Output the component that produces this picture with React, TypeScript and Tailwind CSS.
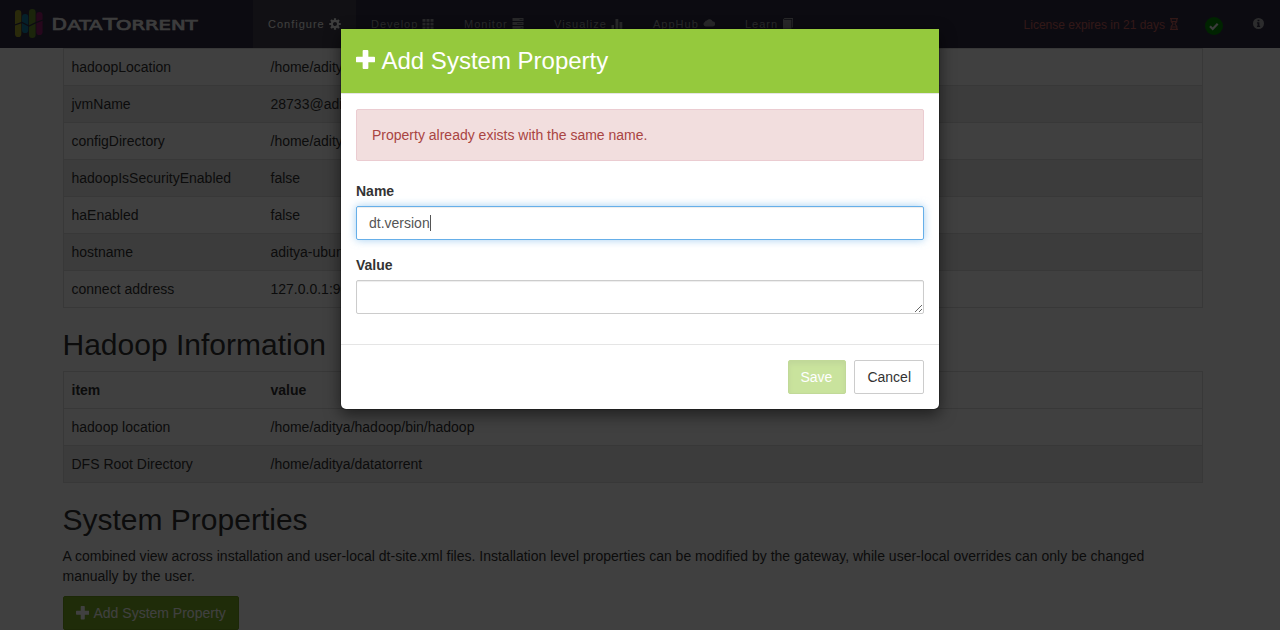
import type { ReactNode } from 'react';

const gatewayRows = [
  ['hadoopLocation', '/home/aditya'],
  ['jvmName', '28733@aditya'],
  ['configDirectory', '/home/aditya'],
  ['hadoopIsSecurityEnabled', 'false'],
  ['haEnabled', 'false'],
  ['hostname', 'aditya-ubuntu'],
  ['connect address', '127.0.0.1:9090'],
];

const hadoopRows = [
  ['hadoop location', '/home/aditya/hadoop/bin/hadoop'],
  ['DFS Root Directory', '/home/aditya/datatorrent'],
];

function PlusIcon({ className }: { className: string }) {
  return (
    <svg viewBox="0 0 20 20" className={className} fill="currentColor">
      <path d="M8 0h4a1 1 0 0 1 1 1v6h6a1 1 0 0 1 1 1v4a1 1 0 0 1-1 1h-6v6a1 1 0 0 1-1 1H8a1 1 0 0 1-1-1v-6H1a1 1 0 0 1-1-1V8a1 1 0 0 1 1-1h6V1a1 1 0 0 1 1-1z" />
    </svg>
  );
}

function Logo() {
  return (
    <svg width="190" height="32" viewBox="0 0 190 32" className="ml-[15px] mt-2 shrink-0">
      <rect x="0" y="2" width="6.3" height="27" rx="3.1" fill="#a8a82c" />
      <rect x="7" y="6" width="6.3" height="19" rx="3.1" fill="#1580a8" />
      <rect x="14" y="1" width="6.6" height="29" rx="3.3" fill="#6c942c" />
      <rect x="21.3" y="4" width="6.3" height="23" rx="3.1" fill="#981c70" />
      <path d="M0 17l7-2.6 7 3.6 7-3.4 7-2.6" fill="none" stroke="#302d45" strokeWidth="1.2" />
      <g fill="#f0f0f0" stroke="#f0f0f0" strokeWidth=".7" fontFamily="DejaVu Sans">
        <text x="36.5" y="21.7" fontSize="16.5" textLength="15.5" lengthAdjust="spacingAndGlyphs">D</text>
        <text x="52.5" y="21.7" fontSize="14" textLength="35" lengthAdjust="spacingAndGlyphs">ATA</text>
        <text x="88" y="21.7" fontSize="16.5" textLength="14" lengthAdjust="spacingAndGlyphs">T</text>
        <text x="101" y="21.7" fontSize="14" textLength="81.5" lengthAdjust="spacingAndGlyphs">ORRENT</text>
      </g>
    </svg>
  );
}

const icons: Record<string, ReactNode> = {
  cog: (
    <>
      <circle cx="6" cy="6" r="3.1" fill="none" stroke="currentColor" strokeWidth="2.1" />
      <path d="M6 .3v2M6 9.7v2M.3 6h2M9.7 6h2M2 2l1.4 1.4M8.6 8.6L10 10M10 2L8.6 3.4M3.4 8.6L2 10" stroke="currentColor" strokeWidth="2.2" />
    </>
  ),
  th: <path d="M.5 1h3v2.8h-3zM4.5 1h3v2.8h-3zM8.5 1h3v2.8h-3zM.5 4.8h3v2.8h-3zM4.5 4.8h3v2.8h-3zM8.5 4.8h3v2.8h-3zM.5 8.6h3v2.8h-3zM4.5 8.6h3v2.8h-3zM8.5 8.6h3v2.8h-3z" />,
  tasks: (
    <>
      <path d="M.5 0h11v3H.5zM.5 4h11v3H.5zM.5 8h11v3H.5z" />
      <path d="M7.5 1h3v1h-3zM5 5h5.5v1H5zM8.5 9h2v1h-2z" fill="#302d45" opacity=".6" />
    </>
  ),
  stats: <path d="M.5 7H3v4.5H.5zM4.5 1h2.8v10.5H4.5zM8.5 4h2.8v7.5H8.5z" />,
  cloud: <path d="M2.6 8.4A2.3 2.3 0 0 1 1.9 4 2.2 2.2 0 0 1 3.9 2.6 3.4 3.4 0 0 1 9.7 3.4a2.5 2.5 0 0 1-.1 5z" />,
  book: <path d="M2.5 0H11v9.5h-.8V.9H2.3l-.7.9h7.800V12H1V1.5z" />,
};

function NavItem({ label, icon, className }: { label: string; icon: string; className: string }) {
  return (
    <a className={`flex h-12 shrink-0 items-center pl-[15px] text-[11px] tracking-[1px] ${className}`}>
      {label}
      <svg viewBox="0 0 12 12" className="ml-1 size-3 shrink-0" fill="currentColor">
        {icons[icon]}
      </svg>
    </a>
  );
}

function Rows({ rows }: { rows: string[][] }) {
  return (
    <>
      {rows.map(([name, value], i) => (
        <div
          key={name}
          className={`flex h-[37px] items-center border-t border-[#ddd] pl-2 ${i % 2 === 1 ? 'bg-[#f0f0f0]' : ''}`}
        >
          <span className="w-[199px] shrink-0">{name}</span>
          <span>{value}</span>
        </div>
      ))}
    </>
  );
}

function Header() {
  return (
    <header className="flex h-12 bg-[#302d45]">
      <Logo />
      <nav className="ml-[48px] flex text-[#a0a0a4]">
        <NavItem label="Configure" icon="cog" className="w-[103px] bg-[#44424f] text-[#f8f8f8]" />
        <NavItem label="Develop" icon="th" className="w-[93px]" />
        <NavItem label="Monitor" icon="tasks" className="w-[90px]" />
        <NavItem label="Visualize" icon="stats" className="w-[99px]" />
        <NavItem label="AppHub" icon="cloud" className="w-[92px]" />
        <NavItem label="Learn" icon="book" className="w-[80px]" />
      </nav>
      <div className="ml-auto flex items-center pr-4">
        <span className="mt-[2px] text-[12px] text-[#c6605e]">License expires in 21 days</span>
        <svg viewBox="0 0 10 12" className="ml-1 h-3 w-[10px] text-[#c6605e]" fill="none" stroke="currentColor" strokeWidth="1.2">
          <path d="M1 .6h8M1 11.4h8M2.2 1v2.2C2.2 4.6 4 5 4 6S2.200 7.4 2.2 8.8V11M7.8 1v2.2C7.8 4.6 6 5 6 6s1.8 1.4 1.8 2.8V11M3 3.6h4M3 9h4" />
        </svg>
        <svg viewBox="0 0 18 18" className="ml-[26px] mt-[3px] size-[18px]">
          <circle cx="9" cy="9" r="9" fill="#008c00" />
          <path d="M5 9.3l2.7 2.7 5-5.3" fill="none" stroke="#eee" strokeWidth="2.2" />
        </svg>
        <svg viewBox="0 0 12 12" className="mb-px ml-[30px] size-[11px]">
          <circle cx="6" cy="6" r="6" fill="#b0b0b4" />
          <path d="M5 2h2v1.6H5zM4.3 4.7H7v3.7h.8v1.3H4.3V8.4H5V6h-.7z" fill="#302d45" />
        </svg>
      </div>
    </header>
  );
}

function Page() {
  return (
    <div className="h-[630px] overflow-hidden bg-white text-[#333]">
      <Header />
      <main className="ml-[62.5px] w-[1140px]">
        <div className="border-x border-b border-[#ddd]">
          <Rows rows={gatewayRows} />
        </div>
        <h2 className="mt-5 mb-[10px] text-[30px] leading-[33px]">Hadoop Information</h2>
        <div className="border-x border-b border-[#ddd]">
          <div className="flex h-[37px] items-center border-t border-[#ddd] pl-2 font-bold">
            <span className="w-[199px]">item</span>
            <span>value</span>
          </div>
          <Rows rows={hadoopRows} />
        </div>
        <h2 className="mt-5 mb-[10px] text-[30px] leading-[33px]">System Properties</h2>
        <p className="mb-[10px] tracking-[0.007px]">
          A combined view across installation and user-local dt-site.xml files. Installation level properties can be
          modified by the gateway, while user-local overrides can only be changed manually by the user.
        </p>
        <button className="flex h-[34px] items-center rounded-[2px] border border-[#70a01e] bg-[#7cb124] px-3 text-white">
          <PlusIcon className="mr-[4.5px] size-[13.5px]" />
          Add System Property
        </button>
      </main>
    </div>
  );
}

function Modal() {
  return (
    <section className="h-[382px] w-[600px] rounded-[6px] border border-black/20 bg-white bg-clip-padding text-[#333] shadow-[0_5px_15px_rgba(0,0,0,0.5)]">
      <div className="flex h-[65px] items-center border-b border-[#e5e5e5] bg-[#95c93d] px-[15px] text-[24px] text-white">
        <PlusIcon className="mr-[6.5px] mb-[3px] size-[19px]" />
        <h4 className="leading-[34px]">Add System Property</h4>
      </div>
      <div className="p-[15px]">
        <div className="mb-5 rounded-[2px] border border-[#ebccd1] bg-[#f2dede] p-[15px] text-[#a94442]">
          Property already exists with the same name.
        </div>
        <label className="mb-[5px] block font-bold">Name</label>
        <div className="mb-[15px] flex h-[34px] items-center rounded-[2px] border border-[#66afe9] px-3 text-[#555] shadow-[inset_0_1px_1px_rgba(0,0,0,0.075),0_0_8px_rgba(102,175,233,0.6)]">
          dt.version
          <span className="h-4 w-px bg-[#555]" />
        </div>
        <label className="mb-[5px] block font-bold">Value</label>
        <textarea className="mb-[15px] block h-[34px] w-full resize-y overflow-hidden rounded-[2px] border border-[#ccc] px-3 py-[6px] shadow-[inset_0_1px_1px_rgba(0,0,0,0.075)] outline-none" />
      </div>
      <div className="flex justify-end gap-2 border-t border-[#e5e5e5] p-[15px]">
        <button className="h-[34px] w-[58px] rounded-[2px] border border-[#85b534] bg-[#95c93d] pr-[13px] pl-[11px] text-white opacity-50 shadow-[inset_0_3px_5px_rgba(0,0,0,0.125)]">
          Save
        </button>
        <button className="h-[34px] rounded-[2px] border border-[#ccc] bg-white px-3 text-[#333]">Cancel</button>
      </div>
    </section>
  );
}

export default function App() {
  return (
    <div className="relative h-[630px] w-[1280px] overflow-hidden font-['Liberation_Sans',Arial,sans-serif] text-[14px] leading-5">
      <Page />
      <div className="absolute inset-0 flex items-start justify-center bg-black/75 pt-7">
        <Modal />
      </div>
    </div>
  );
}
